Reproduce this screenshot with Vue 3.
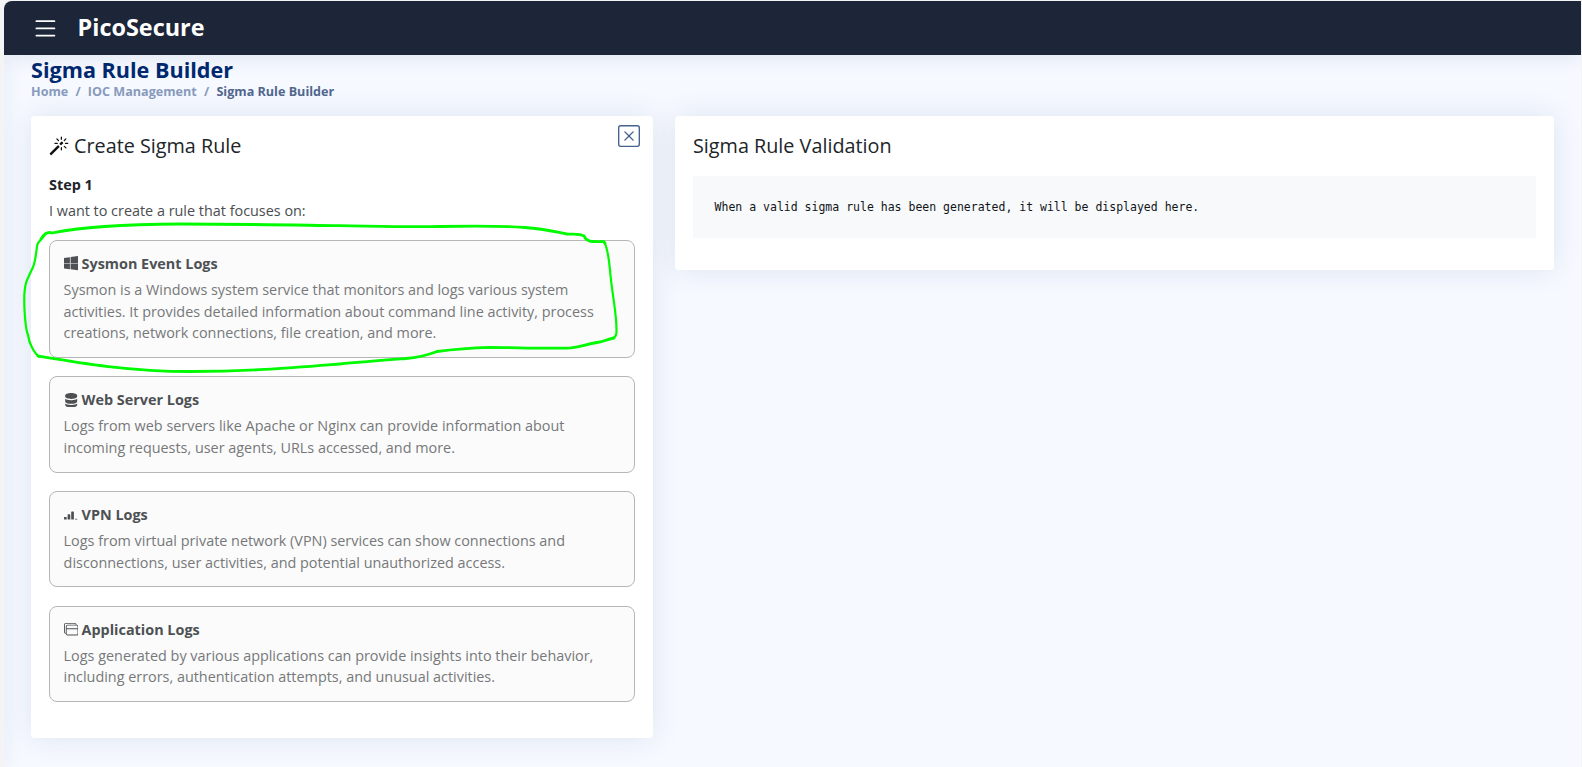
<script setup>
const options = [
  {
    icon: 'windows',
    title: 'Sysmon Event Logs',
    lines: [
      'Sysmon is a Windows system service that monitors and logs various system',
      'activities. It provides detailed information about command line activity, process',
      'creations, network connections, file creation, and more.',
    ],
  },
  {
    icon: 'server',
    title: 'Web Server Logs',
    lines: [
      'Logs from web servers like Apache or Nginx can provide information about',
      'incoming requests, user agents, URLs accessed, and more.',
    ],
  },
  {
    icon: 'reception',
    title: 'VPN Logs',
    lines: [
      'Logs from virtual private network (VPN) services can show connections and',
      'disconnections, user activities, and potential unauthorized access.',
    ],
  },
  {
    icon: 'stack',
    title: 'Application Logs',
    lines: [
      'Logs generated by various applications can provide insights into their behavior,',
      'including errors, authentication attempts, and unusual activities.',
    ],
  },
]

const icons = {
  windows:
    'M6.555 1.375 0 2.237v5.45h6.555V1.375zM0 13.795l6.555.933V8.313H0v5.482zm7.278-5.4.026 6.378L16 16V8.395H7.278zM16 0 7.33 1.244v6.414H16V0z',
  server:
    'M1.333 2.667C1.333 1.194 4.318 0 8 0s6.667 1.194 6.667 2.667V4c0 1.473-2.985 2.667-6.667 2.667S1.333 5.473 1.333 4V2.667zM1.333 6.334v3C1.333 10.805 4.318 12 8 12s6.667-1.194 6.667-2.667V6.334a6.510 6.510 0 0 1-1.458.79C11.810 7.684 9.967 8 8 8c-1.966 0-3.809-.317-5.208-.876a6.508 6.508 0 0 1-1.458-.79zM14.667 11.668a6.510 6.510 0 0 1-1.458.789c-1.400.560-3.242.876-5.210.876-1.966 0-3.809-.316-5.208-.876a6.510 6.510 0 0 1-1.458-.79v1.666C1.333 14.806 4.318 16 8 16s6.667-1.194 6.667-2.667v-1.665z',
  reception:
    'M0 11.5a.5.5 0 0 1 .5-.5h2a.5.5 0 0 1 .5.5v2a.5.5 0 0 1-.5.5h-2a.5.5 0 0 1-.5-.5v-2zm4-3a.5.5 0 0 1 .5-.5h2a.5.5 0 0 1 .5.5v5a.5.5 0 0 1-.5.5h-2a.5.5 0 0 1-.5-.5v-5zm4-3a.5.5 0 0 1 .5-.5h2a.5.5 0 0 1 .5.5v8a.5.5 0 0 1-.5.5h-2a.5.5 0 0 1-.5-.5v-8zm4 8a.5.5 0 0 1 .5-.5h2a.5.5 0 0 1 0 1h-2a.5.5 0 0 1-.5-.5z',
  stack:
    'M12 1a2 2 0 0 1 2 2 2 2 0 0 1 2 2v8a2 2 0 0 1-2 2H4a2 2 0 0 1-2-2 2 2 0 0 1-2-2V3a2 2 0 0 1 2-2h10ZM2 12V5a2 2 0 0 1 2-2h9a1 1 0 0 0-1-1H2a1 1 0 0 0-1 1v8a1 1 0 0 0 1 1Zm1-4v5a1 1 0 0 0 1 1h10a1 1 0 0 0 1-1V8H3Zm12-1V5a1 1 0 0 0-1-1H4a1 1 0 0 0-1 1v2h12Z',
}
</script>

<template>
  <div class="frame">
    <div class="page">
      <header class="topbar">
        <svg class="menu" viewBox="0 0 16 16">
          <path d="M2.500 12a.5.5 0 0 1 .5-.5h10a.5.5 0 0 1 0 1H3a.5.5 0 0 1-.5-.5zm0-4a.5.5 0 0 1 .5-.5h10a.5.5 0 0 1 0 1H3a.5.5 0 0 1-.5-.5zm0-4a.5.5 0 0 1 .5-.5h10a.5.5 0 0 1 0 1H3a.5.5 0 0 1-.5-.5z" />
        </svg>
        <span class="brand">PicoSecure</span>
      </header>

      <main class="main">
        <h1 class="page-title">Sigma Rule Builder</h1>
        <nav class="crumbs">
          <a>Home</a><span class="sep">/</span><a>IOC Management</a><span class="sep">/</span><span class="current">Sigma Rule Builder</span>
        </nav>

        <div class="columns">
          <section class="card builder">
            <svg class="close" viewBox="0 0 16 16">
              <path d="M14 1a1 1 0 0 1 1 1v12a1 1 0 0 1-1 1H2a1 1 0 0 1-1-1V2a1 1 0 0 1 1-1h12zM2 0a2 2 0 0 0-2 2v12a2 2 0 0 0 2 2h12a2 2 0 0 0 2-2V2a2 2 0 0 0-2-2H2z" />
              <path d="M4.646 4.646a.5.5 0 0 1 .708 0L8 7.293l2.646-2.647a.5.5 0 0 1 .708.708L8.707 8l2.647 2.646a.5.5 0 0 1-.708.708L8 8.707l-2.646 2.647a.5.5 0 0 1-.708-.708L7.293 8 4.646 5.354a.5.5 0 0 1 0-.708z" />
            </svg>
            <h2 class="card-title">
              <svg class="wand" viewBox="0 0 16 16">
                <path d="M9.500 2.672a.5.5 0 1 0 1 0V.843a.5.5 0 0 0-1 0v1.829Zm4.500.035A.5.5 0 0 0 13.293 2L12 3.293a.5.5 0 1 0 .707.707L14 2.707ZM7.293 4A.5.5 0 1 0 8 3.293L6.707 2A.5.5 0 0 0 6 2.707L7.293 4Zm-.621 2.500a.5.5 0 1 0 0-1H4.843a.5.5 0 1 0 0 1h1.829Zm8.485 0a.5.5 0 1 0 0-1h-1.829a.5.5 0 0 0 0 1h1.829ZM13.293 10A.5.5 0 1 0 14 9.293L12.707 8a.5.5 0 1 0-.707.707L13.293 10ZM9.500 11.157a.5.5 0 0 0 1 0V9.328a.5.5 0 0 0-1 0v1.829Zm1.854-5.097a.5.5 0 0 0 0-.706l-.708-.708a.5.5 0 0 0-.707 0L8.646 5.940a.5.5 0 0 0 0 .707l.708.708a.5.5 0 0 0 .707 0l1.293-1.293Zm-3 3a.5.5 0 0 0 0-.706l-.708-.708a.5.5 0 0 0-.707 0L.646 13.940a.5.5 0 0 0 0 .707l.707.707a.5.5 0 0 0 .707 0L8.354 9.060Z" />
              </svg>
              <span class="card-title-text">Create Sigma Rule</span>
            </h2>
            <div class="step">Step 1</div>
            <div class="prompt">I want to create a rule that focuses on:</div>
            <div class="options">
              <article v-for="o in options" :key="o.title" class="option">
                <h3 class="option-title">
                  <svg class="option-icon" viewBox="0 0 16 16"><path :d="icons[o.icon]" /></svg>
                  <span>{{ o.title }}</span>
                </h3>
                <div v-for="l in o.lines" :key="l" class="desc">{{ l }}</div>
              </article>
            </div>
          </section>

          <section class="card validation">
            <h2 class="card-title">Sigma Rule Validation</h2>
            <pre class="output">When a valid sigma rule has been generated, it will be displayed here.</pre>
          </section>
        </div>
      </main>
      <div class="drawer-edge"></div>
    </div>

    <!-- hand-drawn highlight around the first option -->
    <svg class="marker" viewBox="0 0 1582 767">
      <path class="thick" d="M41 239C44 234 48 231.500 52 233C85 226 130 224.200 180 224C240 224 290 225 340 225.700C380 226.300 410 227.200 440 226.500C480 225.800 500 225.700 525 227.500C545 229 556 232 567 234C575 234.400 580 233.500 584 236C587 243 594 241.500 603 241.500L605 243" />
      <path class="thin" d="M604 241.500C608 249 609 259 610 270C612 295 617 314 616.500 332C616.500 336 615 337.500 612 338.500" />
      <path class="thick" d="M614 338C606 339.500 603 342 597 342.500C586 344 582 347 571 347.800C545 349 520 347.500 490 347.300C470 347.800 455 349 437 351.500C428 355 420 357.500 406 358.500C380 360.500 360 362 340 364C290 368 250 371.500 190 371.500C130 371.500 80 363 38 356" />
      <path class="thin" d="M39 356.500C34 353 29 343 28 335C25 328 22.500 295 26 283C28 277 31 272 33.500 266C37 255 36 247 38 243L44 236" />
    </svg>
  </div>
</template>

<style>
body {
  margin: 0;
  background: #f4f6f4;
}
</style>

<style scoped>
.frame {
  position: relative;
  box-sizing: border-box;
  width: 1582px;
  height: 767px;
  padding: 1px 1px 0 4px;
  overflow: hidden;
  background: #f3f4f3;
  font-family: 'Open Sans', 'Noto Sans', sans-serif;
  font-size: 14.4px;
}
.page {
  position: relative;
  height: 766px;
  overflow: hidden;
  border-top-left-radius: 8px;
  background: #f6f9ff;
}
.topbar {
  position: relative;
  z-index: 3;
  box-sizing: border-box;
  display: flex;
  align-items: center;
  height: 54px;
  padding-left: 26.500px;
  background: #1d2538;
  box-shadow: 0 2px 20px rgba(1, 41, 112, 0.1);
}
.menu {
  width: 28.800px;
  height: 28.800px;
  margin-right: 18.300px;
  fill: #fff;
}
.brand {
  margin-bottom: 2px;
  color: #fff;
  font-size: 23.400px;
  font-weight: 700;
  line-height: 30px;
}
.drawer-edge {
  position: absolute;
  z-index: 2;
  top: 54px;
  bottom: 0;
  left: -10px;
  width: 10px;
  box-shadow: 0 0 20px rgba(1, 41, 112, 0.1);
}
.main {
  padding: 2px 27px 0;
}
.page-title {
  margin: 0;
  color: #012970;
  font-size: 21.600px;
  font-weight: 700;
  line-height: 26px;
}
.crumbs {
  height: 19px;
  margin: -1px 0 15px;
  color: #899bbd;
  font-size: 12.600px;
  font-weight: 700;
  line-height: 19px;
  white-space: nowrap;
}
.sep {
  padding: 0 7.200px;
}
.current {
  color: #51678f;
}
.columns {
  display: flex;
  align-items: flex-start;
  gap: 22px;
}
.card {
  position: relative;
  box-sizing: border-box;
  padding: 18px 18px 0;
  border-radius: 4px;
  background: #fff;
  box-shadow: 0 0 30px rgba(1, 41, 112, 0.1);
}
.builder {
  width: 622px;
  height: 622px;
}
.validation {
  width: 879px;
  height: 154px;
}
.close {
  position: absolute;
  top: 9px;
  right: 13px;
  width: 22px;
  height: 22px;
  fill: #46628f;
}
.card-title {
  display: flex;
  align-items: center;
  margin: 0;
  color: #212529;
  font-size: 19.800px;
  font-weight: 400;
  line-height: 24px;
  white-space: nowrap;
}
.wand {
  width: 19.800px;
  height: 19.800px;
  margin-right: 5.200px;
  fill: #111;
}
.step {
  margin-top: 16.400px;
  color: #212529;
  font-weight: 700;
  line-height: 22px;
}
.prompt {
  margin-top: 4px;
  color: #4a4d50;
  line-height: 22px;
}
.options {
  display: flex;
  flex-direction: column;
  gap: 18.400px;
  margin-top: 17.600px;
}
.option {
  box-sizing: border-box;
  padding: 12px 13.600px 13.200px;
  border: 1px solid #b5b6b8;
  border-radius: 8px;
  background: #fbfbfb;
}
.option-title {
  display: flex;
  align-items: center;
  margin: 0 0 4px;
  color: #4d5154;
  font-size: 14.400px;
  font-weight: 700;
  line-height: 22px;
}
.option-icon {
  width: 14.400px;
  height: 14.400px;
  margin: -1px 3.600px 0 0;
  fill: #4d5154;
}
.desc {
  color: #76787a;
  line-height: 21.600px;
  white-space: nowrap;
}
.output {
  box-sizing: border-box;
  height: 62px;
  margin: 18px 0 0;
  padding: 22px 21.600px 0;
  background: #f7f9fb;
  color: #111418;
  font-family: 'DejaVu Sans Mono', monospace;
  font-size: 11.510px;
  line-height: 19px;
}
.marker {
  position: absolute;
  z-index: 5;
  top: 0;
  left: 0;
  width: 1582px;
  height: 767px;
  fill: none;
  stroke: #00fa00;
  stroke-linecap: round;
  stroke-linejoin: round;
  pointer-events: none;
}
.thick {
  stroke-width: 2.800px;
}
.thin {
  stroke-width: 2.200px;
}
</style>
